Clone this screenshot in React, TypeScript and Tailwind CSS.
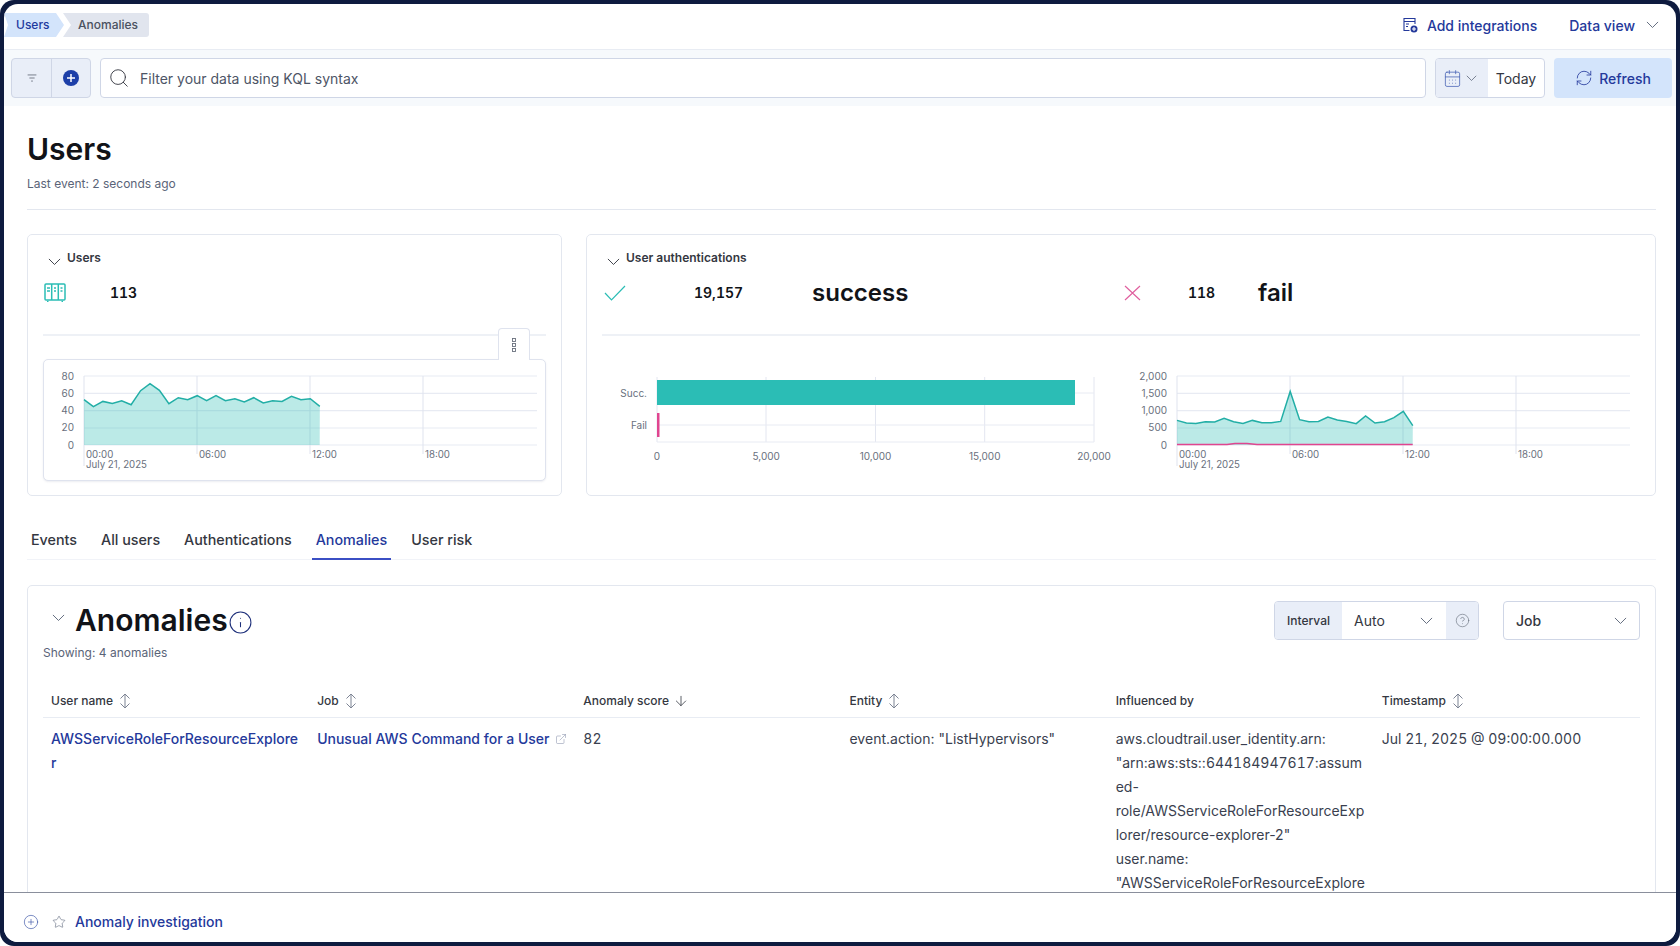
import { ArrowDown, CalendarDays, CircleHelp, CirclePlus, ExternalLink, Info, RefreshCw, Search, Star } from 'lucide-react';

const usersSeries = [525, 546, 530, 536, 528, 540, 498, 477, 497, 537, 519, 525, 513, 528, 513, 528, 522, 532, 519, 535, 528, 530, 515, 525, 522, 545];
const authSeries = [587, 595, 596, 591, 592, 581, 591, 596, 587, 594, 594, 590, 500, 585, 591, 590, 577, 586, 590, 597, 574, 595, 591, 579, 560, 603];

// series values were read off the reference, y in px relative to the chart top
const toPoints = (values: number[]) =>
  values.map((v, i) => `${(i * 9.43).toFixed(1)},${(v / 3 - 151.3).toFixed(1)}`);

const Chevron = ({ className }: { className: string }) => (
  <svg viewBox="0 0 14 8" className={className} fill="none" stroke="currentColor" strokeWidth="1">
    <path d="M1 1l6 6 6-6" />
  </svg>
);

const SortIcon = () => (
  <svg viewBox="0 0 12 16" className="h-[16px] w-[12px] text-[#7d8494]" fill="none" stroke="currentColor" strokeWidth="1">
    <path d="M6 1v14M1.5 5.5 6 1l4.5 4.5M1.5 10.5 6 15l4.5-4.5" />
  </svg>
);

const AreaChart = ({ series, yLabels, left, pink }: { series: number[]; yLabels: string[]; left: number; pink?: boolean }) => {
  const pts = toPoints(series);
  const w = 453;
  const h = 69;
  return (
    <svg width="500" height="100" viewBox={`${-left} -6 500 100`} className="block font-[Inter,sans-serif]">
      {[0, 17.3, 34.6, 52, 69].map((y) => (
        <line key={y} x1="0" x2={w} y1={y} y2={y} stroke="#e8ebf3" strokeWidth="1.2" />
      ))}
      {[0, 113, 226, 339].map((x) => (
        <line key={x} x1={x} x2={x} y1="0" y2={x === 0 ? 90 : 78} stroke="#dfe3ee" strokeWidth="1" />
      ))}
      <polygon points={`0,${h} ${pts.join(' ')} 235.7,${h}`} fill="#2bbdb5" fillOpacity="0.32" />
      <polyline points={pts.join(' ')} fill="none" stroke="#22aea6" strokeWidth="1.5" />
      {pink && <polyline points={`0,${h - 0.5} 50,${h - 0.5} 58,${h - 1.5} 70,${h - 1.5} 80,${h - 0.5} 235.7,${h - 0.5}`} fill="none" stroke="#e0458f" strokeWidth="1.5" />}
      {yLabels.map((t, i) => (
        <text key={t} x="-10" y={i * 17.3 + 3.5} textAnchor="end" fontSize="10" fill="#69707d">{t}</text>
      ))}
      {['00:00', '06:00', '12:00', '18:00'].map((t, i) => (
        <text key={t} x={i * 113 + 2} y="82" fontSize="9.7" fill="#69707d">{t}</text>
      ))}
      <text x="2" y="92" fontSize="9.7" fill="#69707d">July 21, 2025</text>
    </svg>
  );
};

const BarChart = () => (
  <svg width="530" height="100" viewBox="-55 -6 530 100" className="block font-[Inter,sans-serif]">
    {[0, 109, 218.5, 327.7, 437].map((x) => (
      <line key={x} x1={x} x2={x} y1="0" y2="65" stroke="#e3e6f0" strokeWidth="1" />
    ))}
    <line x1="0" x2="437" y1="16" y2="16" stroke="#e8ebf3" />
    <line x1="0" x2="437" y1="48" y2="48" stroke="#e8ebf3" />
    <line x1="0" x2="437" y1="65" y2="65" stroke="#e8ebf3" />
    <rect x="0" y="3" width="418" height="25" fill="#2bbdb5" />
    <rect x="0" y="36" width="2.5" height="24" fill="#e0458f" />
    <text x="-10" y="19.5" textAnchor="end" fontSize="10" fill="#69707d">Succ.</text>
    <text x="-10" y="51.5" textAnchor="end" fontSize="10" fill="#69707d">Fail</text>
    {['0', '5,000', '10,000', '15,000', '20,000'].map((t, i) => (
      <text key={t} x={i * 109.25} y="83" textAnchor="middle" fontSize="10" fill="#69707d">{t}</text>
    ))}
  </svg>
);

const CardTitle = ({ children }: { children: string }) => (
  <div className="flex h-[20px] items-center pl-[5px]">
    <Chevron className="mt-[8px] w-[13px] text-[#343741]" />
    <span className="ml-[6px] text-[12px] font-semibold text-[#343741]">{children}</span>
  </div>
);

export default function App() {
  return (
    <div className="h-[946px] w-[1680px] overflow-hidden rounded-[14px] bg-[#0e1b3f] p-[4px] font-[Inter,sans-serif]">
      <div className="flex h-[938px] flex-col overflow-hidden rounded-[14px] bg-white">
        {/* top bar */}
        <div className="flex h-[45px] shrink-0 items-center justify-between pb-[3px] pr-[17px]">
          <div className="flex h-[24px] items-center text-[12px] font-medium">
            <span className="flex h-full w-[60px] items-center bg-[#d3e4fb] pl-[12px] text-[#1f3a9e] [clip-path:polygon(0_0,52px_0,100%_50%,52px_100%,0_100%,4px_50%)]">
              Users
            </span>
            <span className="-ml-[1px] flex h-full w-[86px] items-center rounded-r-[3px] bg-[#e1e5ee] pl-[15px] text-[#4a5160] [clip-path:polygon(0_0,100%_0,100%_100%,0_100%,8px_50%)]">
              Anomalies
            </span>
          </div>
          <div className="flex items-center text-[14px] font-medium text-[#24399b]">
            <svg viewBox="0 0 16 16" className="mr-[9px] h-[16px] w-[16px]" fill="none" stroke="currentColor" strokeWidth="1.1">
              <path d="M13 7V1.5H2v12h5.5M2 4.5h11M4 7h3M4 9.5h2" />
              <circle cx="12" cy="12" r="3.5" fill="currentColor" stroke="none" />
              <path d="M12 10v4M10 12h4" stroke="#fff" />
            </svg>
            Add integrations
            <span className="ml-[32px]">Data view</span>
            <Chevron className="ml-[11px] w-[13px] text-[#5a6478]" />
          </div>
        </div>

        {/* query bar */}
        <div className="flex h-[57px] shrink-0 items-center gap-[9px] border-t border-[#e8ecf3] bg-[#f6f9fc] pl-[7px] pr-[4px]">
          <div className="flex h-[40px] w-[80px] overflow-hidden rounded-[4px] border border-[#cfd6e6] bg-[#e9eef8]">
            <div className="flex w-[40px] items-center justify-center border-r border-[#cfd6e6]">
              <svg viewBox="0 0 16 16" className="h-[14px] w-[14px] text-[#69707d]" fill="none" stroke="currentColor" strokeWidth="1">
                <path d="M3 4.5h10M5 8h6M7 11.5h2" />
              </svg>
            </div>
            <div className="flex flex-1 items-center justify-center">
              <svg viewBox="0 0 16 16" className="h-[16px] w-[16px]">
                <circle cx="8" cy="8" r="8" fill="#1d3fa8" />
                <path d="M8 4v8M4 8h8" stroke="#fff" strokeWidth="1.5" />
              </svg>
            </div>
          </div>
          <div className="flex h-[40px] flex-1 items-center rounded-[4px] border border-[#cfd6e6] bg-white pl-[7px] text-[14px] text-[#4d5566]">
            <Search className="h-[22px] w-[22px] text-[#343741]" strokeWidth={1} />
            <span className="ml-[10px]">Filter your data using KQL syntax</span>
          </div>
          <div className="flex h-[40px] w-[110px] overflow-hidden rounded-[4px] border border-[#cfd6e6] bg-white">
            <div className="flex w-[52px] items-center justify-center gap-[4px] bg-[#e9eef8] pr-[4px] text-[#4a64b5]">
              <CalendarDays className="h-[19px] w-[19px]" strokeWidth={1} />
              <Chevron className="w-[11px] text-[#5a6478]" />
            </div>
            <div className="flex flex-1 items-center justify-center text-[14px] text-[#343741]">Today</div>
          </div>
          <div className="flex h-[40px] w-[118px] items-center justify-center gap-[6px] rounded-[4px] bg-[#d3e4fb] text-[14px] font-medium text-[#24399b]">
            <RefreshCw className="h-[18px] w-[18px]" strokeWidth={1.1} />
            Refresh
          </div>
        </div>

        {/* page body, cut off by the bottom bar */}
        <div className="min-h-0 flex-1 overflow-hidden pl-[23px] pr-[20px]">
          <h1 className="pt-[25px] text-[30px] font-semibold leading-[36px] text-[#111318]">Users</h1>
          <p className="mt-[8px] text-[12px] leading-[18px] text-[#5a6478]">Last event: 2 seconds ago</p>
          <div className="mt-[16px] h-px bg-[#e3e7ef]" />

          <div className="mt-[24px] flex gap-[24px]">
            <div className="relative h-[262px] w-[535px] rounded-[5px] border border-[#e3e7ef] px-[15px] pt-[13px]">
              <CardTitle>Users</CardTitle>
              <div className="mt-[12px] flex h-[24px] items-center">
                <svg viewBox="0 0 22 19" className="ml-[1px] h-[19px] w-[22px] text-[#2bbdb5]" fill="none" stroke="currentColor" strokeWidth="1.5">
                  <rect x="1" y="1" width="20" height="16" rx="1" />
                  <path d="M7.7 1v16M14.3 1v16M3 5h3M3 8h3M10 5h2M10 8h2M16.5 5h2M16.5 8h2M3 18.5h1.5M17.5 18.5h1.5" />
                </svg>
                <span className="ml-[44px] text-[14px] font-semibold tabular-nums text-[#111318]">113</span>
              </div>
              <div className="mt-[30px] h-[2px] bg-[#eef1f6]" />
              <div className="relative mt-[23px] h-[122px] rounded-[5px] border border-[#dfe3ee] bg-white pt-[10px] shadow-[0_1px_2px_rgba(100,110,140,0.12)]">
                <AreaChart series={usersSeries} yLabels={['80', '60', '40', '20', '0']} left={40} />
                <div className="absolute -top-[32px] right-[15px] flex h-[32px] w-[32px] items-center justify-center rounded-t-[4px] border border-b-0 border-[#dfe3ee] bg-white">
                  <svg viewBox="0 0 8 16" className="h-[16px] w-[8px] text-[#69707d]" fill="none" stroke="currentColor" strokeWidth="0.9">
                    <rect x="2.5" y="1.5" width="3" height="3" />
                    <rect x="2.5" y="6.5" width="3" height="3" />
                    <rect x="2.5" y="11.5" width="3" height="3" />
                  </svg>
                </div>
              </div>
            </div>

            <div className="h-[262px] flex-1 rounded-[5px] border border-[#e3e7ef] px-[15px] pt-[13px]">
              <CardTitle>User authentications</CardTitle>
              <div className="mt-[13px] flex h-[24px] items-center text-[#111318]">
                <svg viewBox="0 0 22 16" className="ml-[2px] h-[16px] w-[22px] text-[#2bbdb5]" fill="none" stroke="currentColor" strokeWidth="1.2">
                  <path d="M1 8l6.5 7L21 1" />
                </svg>
                <span className="ml-[68px] w-[118px] pb-[2px] text-[14px] font-semibold tabular-nums">19,157</span>
                <span className="w-[312px] text-[24px] font-semibold">success</span>
                <svg viewBox="0 0 17 16" className="h-[16px] w-[17px] text-[#e0609f]" fill="none" stroke="currentColor" strokeWidth="1.2">
                  <path d="M1 1l15 14M16 1 1 15" />
                </svg>
                <span className="ml-[47px] w-[70px] pb-[2px] text-[14px] font-semibold tabular-nums">118</span>
                <span className="text-[24px] font-semibold">fail</span>
              </div>
              <div className="mt-[29px] h-[2px] bg-[#eef1f6]" />
              <div className="mt-[35px] flex">
                <BarChart />
                <div className="-mt-[1px]">
                  <AreaChart series={authSeries} yLabels={['2,000', '1,500', '1,000', '500', '0']} left={45} pink />
                </div>
              </div>
            </div>
          </div>

          {/* tabs */}
          <div className="flex h-[64px] items-end gap-[16px] border-b border-[#f1f3f8] text-[14.3px] font-medium text-[#343741]">
            <div className="-mb-px flex h-[38px] items-center border-b-2 border-transparent px-[4px]">Events</div>
            <div className="-mb-px flex h-[38px] items-center border-b-2 border-transparent px-[4px]">All users</div>
            <div className="-mb-px flex h-[38px] items-center border-b-2 border-transparent px-[4px]">Authentications</div>
            <div className="-mb-px flex h-[38px] items-center border-b-2 border-[#3b4fc4] px-[4px] text-[#24399b]">Anomalies</div>
            <div className="-mb-px flex h-[38px] items-center border-b-2 border-transparent px-[4px]">User risk</div>
          </div>

          {/* anomalies panel */}
          <div className="mt-[25px] rounded-[5px] border border-[#e3e7ef] px-[15px] pt-[15px]">
            <div className="flex h-[39px] items-center justify-between">
              <div className="flex items-center">
                <Chevron className="ml-[9px] -mt-[6px] w-[13px] text-[#5a6478]" />
                <h2 className="-mt-[2px] ml-[10px] text-[30px] font-semibold leading-[36px] text-[#111318]">Anomalies</h2>
                <Info className="mt-[3px] h-[25px] w-[25px] text-[#1d2f7a]" strokeWidth={1} />
              </div>
              <div className="flex items-center gap-[24px]">
                <div className="flex h-[39px] w-[205px] overflow-hidden rounded-[4px] border border-[#cfd6e6] bg-white text-[14px] text-[#343741]">
                  <div className="flex w-[67px] items-center justify-center bg-[#e9eef8] text-[12px] font-medium">Interval</div>
                  <div className="flex flex-1 items-center justify-between pl-[12px] pr-[13px]">
                    Auto
                    <Chevron className="w-[13px] text-[#5a6478]" />
                  </div>
                  <div className="flex w-[32px] items-center justify-center bg-[#e9eef8]">
                    <CircleHelp className="h-[15px] w-[15px] text-[#69707d]" strokeWidth={1} />
                  </div>
                </div>
                <div className="flex h-[39px] w-[137px] items-center justify-between rounded-[4px] border border-[#cfd6e6] bg-white pl-[12px] pr-[12px] text-[14px] font-medium text-[#343741]">
                  Job
                  <Chevron className="w-[13px] text-[#5a6478]" />
                </div>
              </div>
            </div>
            <p className="mt-[4px] text-[12px] leading-[18px] text-[#5a6478]">Showing: 4 anomalies</p>

            <div className="mt-[25px] grid grid-cols-6 border-b border-[#e8ecf3] text-[12px] font-medium text-[#343741]">
              <div className="flex h-[30px] items-center gap-[6px] px-[8px] pb-[2px]">User name <SortIcon /></div>
              <div className="flex h-[30px] items-center gap-[6px] px-[8px] pb-[2px]">Job <SortIcon /></div>
              <div className="flex h-[30px] items-center gap-[4px] px-[8px] pb-[2px]">Anomaly score <ArrowDown className="h-[16px] w-[16px]" strokeWidth={1.2} /></div>
              <div className="flex h-[30px] items-center gap-[6px] px-[8px] pb-[2px]">Entity <SortIcon /></div>
              <div className="flex h-[30px] items-center gap-[6px] px-[8px] pb-[2px]">Influenced by</div>
              <div className="flex h-[30px] items-center gap-[6px] px-[8px] pb-[2px]">Timestamp <SortIcon /></div>
            </div>
            <div className="grid grid-cols-6 pt-[9px] text-[14px] leading-[24px] text-[#3a3f4f]">
              <div className="break-all px-[8px] font-medium text-[#24399b]">AWSServiceRoleForResourceExplorer</div>
              <div className="px-[8px] font-medium text-[#24399b]">
                Unusual AWS Command for a User
                <ExternalLink className="ml-[5px] inline h-[12px] w-[12px] align-[-1px] text-[#7d87a3]" strokeWidth={1} />
              </div>
              <div className="px-[8px] tabular-nums">82</div>
              <div className="px-[8px]">event.action: "ListHypervisors"</div>
              <div className="break-words px-[8px]">
                <div>aws.cloudtrail.user_identity.arn:</div>
                <div>"arn:aws:sts::<span className="tabular-nums">644184947617</span>:assumed-role/AWSServiceRoleForResourceExplorer/resource-explorer-2"</div>
                <div>user.name:</div>
                <div>"AWSServiceRoleForResourceExplorer"</div>
              </div>
              <div className="px-[8px] tabular-nums">Jul 21, 2025 @ 09:00:00.000</div>
            </div>
          </div>
        </div>

        {/* bottom bar */}
        <div className="flex h-[50px] shrink-0 items-center border-t border-[#8a8f9c] bg-white pl-[19px] pt-[8px] text-[14px] font-medium text-[#24399b]">
          <CirclePlus className="h-[16px] w-[16px] text-[#3d56a8]" strokeWidth={1} />
          <Star className="ml-[13px] h-[14px] w-[14px] text-[#5a6478]" strokeWidth={1} />
          <span className="ml-[9px]">Anomaly investigation</span>
        </div>
      </div>
    </div>
  );
}
